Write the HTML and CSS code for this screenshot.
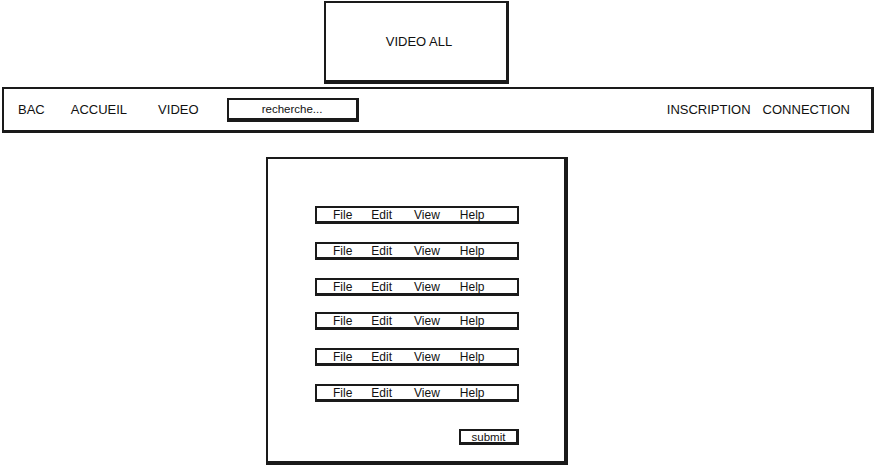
FILE: index.html
```html
<!DOCTYPE html>
<html lang="fr">
<head>
  <meta charset="UTF-8">
  <meta name="viewport" content="width=device-width, initial-scale=1.0">
  <title>Video All</title>
  <link rel="stylesheet" href="styles.css">
</head>
<body>
  <!-- Logo -->
  <div class="logo">VIDEO ALL</div>

  <!-- Barre de navigation -->
  <div class="nav">
    <a class="nav-bac">BAC</a>
    <a class="nav-accueil">ACCUEIL</a>
    <a class="nav-video">VIDEO</a>
    <div class="search">recherche...</div>
    <div class="nav-right">
      <a>INSCRIPTION</a>
      <a>CONNECTION</a>
    </div>
  </div>

  <!-- Formulaire -->
  <div class="panel">
    <div class="menus">
      <div class="menubar"><span>File</span><span>Edit</span><span>View</span><span>Help</span></div>
      <div class="menubar"><span>File</span><span>Edit</span><span>View</span><span>Help</span></div>
      <div class="menubar"><span>File</span><span>Edit</span><span>View</span><span>Help</span></div>
      <div class="menubar short"><span>File</span><span>Edit</span><span>View</span><span>Help</span></div>
      <div class="menubar"><span>File</span><span>Edit</span><span>View</span><span>Help</span></div>
      <div class="menubar"><span>File</span><span>Edit</span><span>View</span><span>Help</span></div>
    </div>
    <div class="actions">
      <button class="submit">submit</button>
    </div>
  </div>
</body>
</html>
```

FILE: styles.css
```css
* { box-sizing: border-box; }
body { font-family: 'Liberation Sans', Arial, sans-serif; font-size: 13px; color: #111; background: #fff; margin: 0; padding: 0; }

.logo { width: 185px; height: 83px; margin: 1px 0 0 324px; border: 2px solid #1a1a1a; border-right-width: 3px; border-bottom-width: 4px; display: flex; align-items: center; justify-content: center; padding-left: 6px; }

.nav { height: 46px; margin: 3px 3px 0 2px; border: 2px solid #1a1a1a; border-right-width: 3px; border-bottom-width: 3px; display: flex; align-items: center; padding: 0 21px 0 14px; }
.nav a { color: #111; }
.nav-accueil { margin-left: 26px; }
.nav-video { margin-left: 31px; }
.search { margin-left: 28px; width: 132px; height: 24px; border: 2px solid #1a1a1a; border-right-width: 3px; border-bottom-width: 4px; font-size: 11.5px; display: flex; align-items: center; justify-content: center; padding-top: 1px; }
.nav-right { margin-left: auto; display: flex; gap: 12px; }

.panel { width: 302px; height: 308px; margin: 24px 0 0 266px; border: 2px solid #1a1a1a; border-right-width: 4px; border-bottom-width: 4px; padding: 47px 0 0 47px; }
.menus { display: flex; flex-direction: column; gap: 18px; }
.menubar { width: 204px; height: 18px; border: 2px solid #1a1a1a; border-bottom-width: 3px; display: flex; align-items: center; gap: 19px; padding-left: 16px; font-size: 12px; }
.menubar span:nth-child(3) { margin-left: 3px; }
.menubar span:nth-child(4) { margin-left: 1px; }
.menubar.short { margin-top: -2px; }

.actions { width: 204px; display: flex; justify-content: flex-end; margin-top: 27px; }
.submit { font-family: inherit; font-size: 11.5px; color: #111; background: #fff; width: 60px; height: 16px; padding: 0; border: 2px solid #1a1a1a; border-right-width: 3px; border-bottom-width: 3px; line-height: 10px; }
```
